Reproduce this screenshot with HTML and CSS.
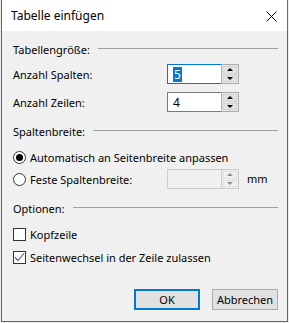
FILE: index.html
```html
<!DOCTYPE html>
<html lang="de">
<head>
  <meta charset="UTF-8" />
  <title>Tabelle einfügen</title>
  <link rel="stylesheet" href="styles.css">
</head>
<body>
  <div class="dialog">
    <!-- Titelleiste -->
    <div class="titlebar">
      <span class="title">Tabelle einfügen</span>
      <span class="close">
        <svg width="11" height="11" viewBox="0 0 11 11"><path d="M0.5 0.5 L10.5 10.5 M10.5 0.5 L0.5 10.5" stroke="#000" stroke-width="1"/></svg>
      </span>
    </div>

    <div class="content">
      <!-- Tabellengröße -->
      <div class="group-head"><span>Tabellengröße:</span><span class="rule"></span></div>

      <div class="field-row first">
        <span class="field-label">Anzahl Spalten:</span>
        <div class="spin focused">
          <div class="spin-input"><span class="sel">5</span></div>
          <div class="spin-btns"><span class="up"></span><span class="down"></span></div>
        </div>
      </div>

      <div class="field-row second">
        <span class="field-label">Anzahl Zeilen:</span>
        <div class="spin">
          <div class="spin-input"><span>4</span></div>
          <div class="spin-btns"><span class="up"></span><span class="down"></span></div>
        </div>
      </div>

      <!-- Spaltenbreite -->
      <div class="group-head"><span>Spaltenbreite:</span><span class="rule"></span></div>

      <div class="option first">
        <span class="radio checked"></span>
        <span>Automatisch an Seitenbreite anpassen</span>
      </div>

      <div class="field-row radio-row">
        <div class="option">
          <span class="radio"></span>
          <span>Feste Spaltenbreite:</span>
        </div>
        <div class="spin disabled">
          <div class="spin-input"></div>
          <div class="spin-btns"><span class="up"></span><span class="down"></span></div>
        </div>
        <span class="unit">mm</span>
      </div>

      <!-- Optionen -->
      <div class="group-head"><span>Optionen:</span><span class="rule"></span></div>

      <div class="option first">
        <span class="check"></span>
        <span>Kopfzeile</span>
      </div>
      <div class="option second">
        <span class="check">
          <svg width="11" height="11" viewBox="0 0 11 11"><path d="M1 5.5 L4 8.5 L10 1.5" fill="none" stroke="#555" stroke-width="1.1"/></svg>
        </span>
        <span>Seitenwechsel in der Zeile zulassen</span>
      </div>
    </div>

    <!-- Schaltflächen -->
    <div class="buttons">
      <button class="btn default">OK</button>
      <button class="btn">Abbrechen</button>
    </div>
  </div>
</body>
</html>
```

FILE: styles.css
```css
/* ===== Reset & Font ===== */
* {
  margin: 0;
  padding: 0;
  box-sizing: border-box;
}
body {
  background: #ececec;
  font-family: "Segoe UI", "Noto Sans", sans-serif;
  font-size: 11px;
  color: #000;
}

/* ===== Dialogfenster ===== */
.dialog {
  width: 287px;
  height: 322px;
  margin-left: 1px;
  background: #f0f0f0;
  border: 1px solid #1979ca;
  border-top: none;
  display: flex;
  flex-direction: column;
}
.titlebar {
  height: 31px;
  background: #fff;
  display: flex;
  align-items: center;
  justify-content: space-between;
  padding: 0 10px 0 9px;
}
.title {
  font-size: 12px;
}
.close {
  display: flex;
  margin-top: 1px;
}

/* ===== Inhalt ===== */
.content {
  padding: 10px 9px 0 11px;
  display: flex;
  flex-direction: column;
}
.group-head {
  height: 16px;
  display: flex;
  align-items: center;
  gap: 8px;
  margin-top: 11px;
}
.group-head:first-child { margin-top: 0; }
.rule {
  flex: 1;
  height: 1px;
  background: #a0a0a0;
  margin-top: -1px;
}
.field-row {
  display: flex;
  align-items: center;
  height: 20px;
}
.field-row.first { margin-top: 7px; }
.field-row.second { margin-top: 8px; }
.field-row.radio-row { margin-top: 4px; }
.field-label {
  width: 154px;
}

/* ===== Drehfeld ===== */
.spin {
  display: flex;
  width: 72px;
  height: 20px;
}
.spin-input {
  width: 54px;
  height: 100%;
  border: 1px solid #7a7a7a;
  border-right: none;
  background: #fff;
  padding-left: 5px;
  display: flex;
  align-items: center;
  font-size: 12px;
}
.spin.focused .spin-input { border-color: #0078d7; }
.sel {
  background: #0078d7;
  color: #fff;
  padding: 0 1px;
  line-height: 15px;
}
.spin-btns {
  width: 18px;
  height: 100%;
  border: 1px solid #adadad;
  background: #e5e5e5;
  display: flex;
  flex-direction: column;
  padding: 1px;
  gap: 1px;
}
.spin-btns span {
  flex: 1;
  background: #e1e1e1;
  border: 1px solid #d6d6d6;
  position: relative;
}
.spin-btns span::after {
  content: "";
  position: absolute;
  left: 50%;
  top: 50%;
  margin-left: -3px;
  border-left: 3px solid transparent;
  border-right: 3px solid transparent;
}
.spin-btns .up::after {
  margin-top: -2px;
  border-bottom: 3px solid #000;
}
.spin-btns .down::after {
  margin-top: -1px;
  border-top: 3px solid #000;
}
.spin.disabled .spin-input {
  border-color: #cccccc;
  background: #f0f0f0;
}
.spin.disabled .spin-btns { border-color: #cccccc; background: #f0f0f0; }
.spin.disabled .spin-btns span { background: #f0f0f0; border-color: #e0e0e0; }
.spin.disabled .spin-btns .up::after { border-bottom-color: #8f8f8f; }
.spin.disabled .spin-btns .down::after { border-top-color: #8f8f8f; }
.unit {
  margin-left: 8px;
  margin-top: -2px;
}

/* ===== Optionsfelder & Kontrollkästchen ===== */
.option {
  display: flex;
  align-items: center;
  gap: 4px;
  height: 16px;
  margin-top: 10px;
}
.field-row .option { margin-top: 0; width: 154px; }
.option.second { margin-top: 7px; }
.radio {
  width: 13px;
  height: 13px;
  border: 1px solid #333;
  border-radius: 50%;
  background: #fff;
  display: flex;
  align-items: center;
  justify-content: center;
}
.radio.checked::after {
  content: "";
  width: 7px;
  height: 7px;
  border-radius: 50%;
  background: #000;
}
.check {
  width: 13px;
  height: 13px;
  border: 1px solid #333;
  background: #fff;
  display: flex;
  align-items: center;
  justify-content: center;
}

/* ===== Schaltflächen ===== */
.buttons {
  margin-top: 24px;
  display: flex;
  justify-content: flex-end;
  gap: 12px;
  padding-right: 9px;
}
.btn {
  width: 66px;
  height: 21px;
  font-family: inherit;
  font-size: 11px;
  background: #e1e1e1;
  border: 1px solid #adadad;
  color: #000;
}
.btn.default {
  border: 2px solid #0078d7;
}
```
